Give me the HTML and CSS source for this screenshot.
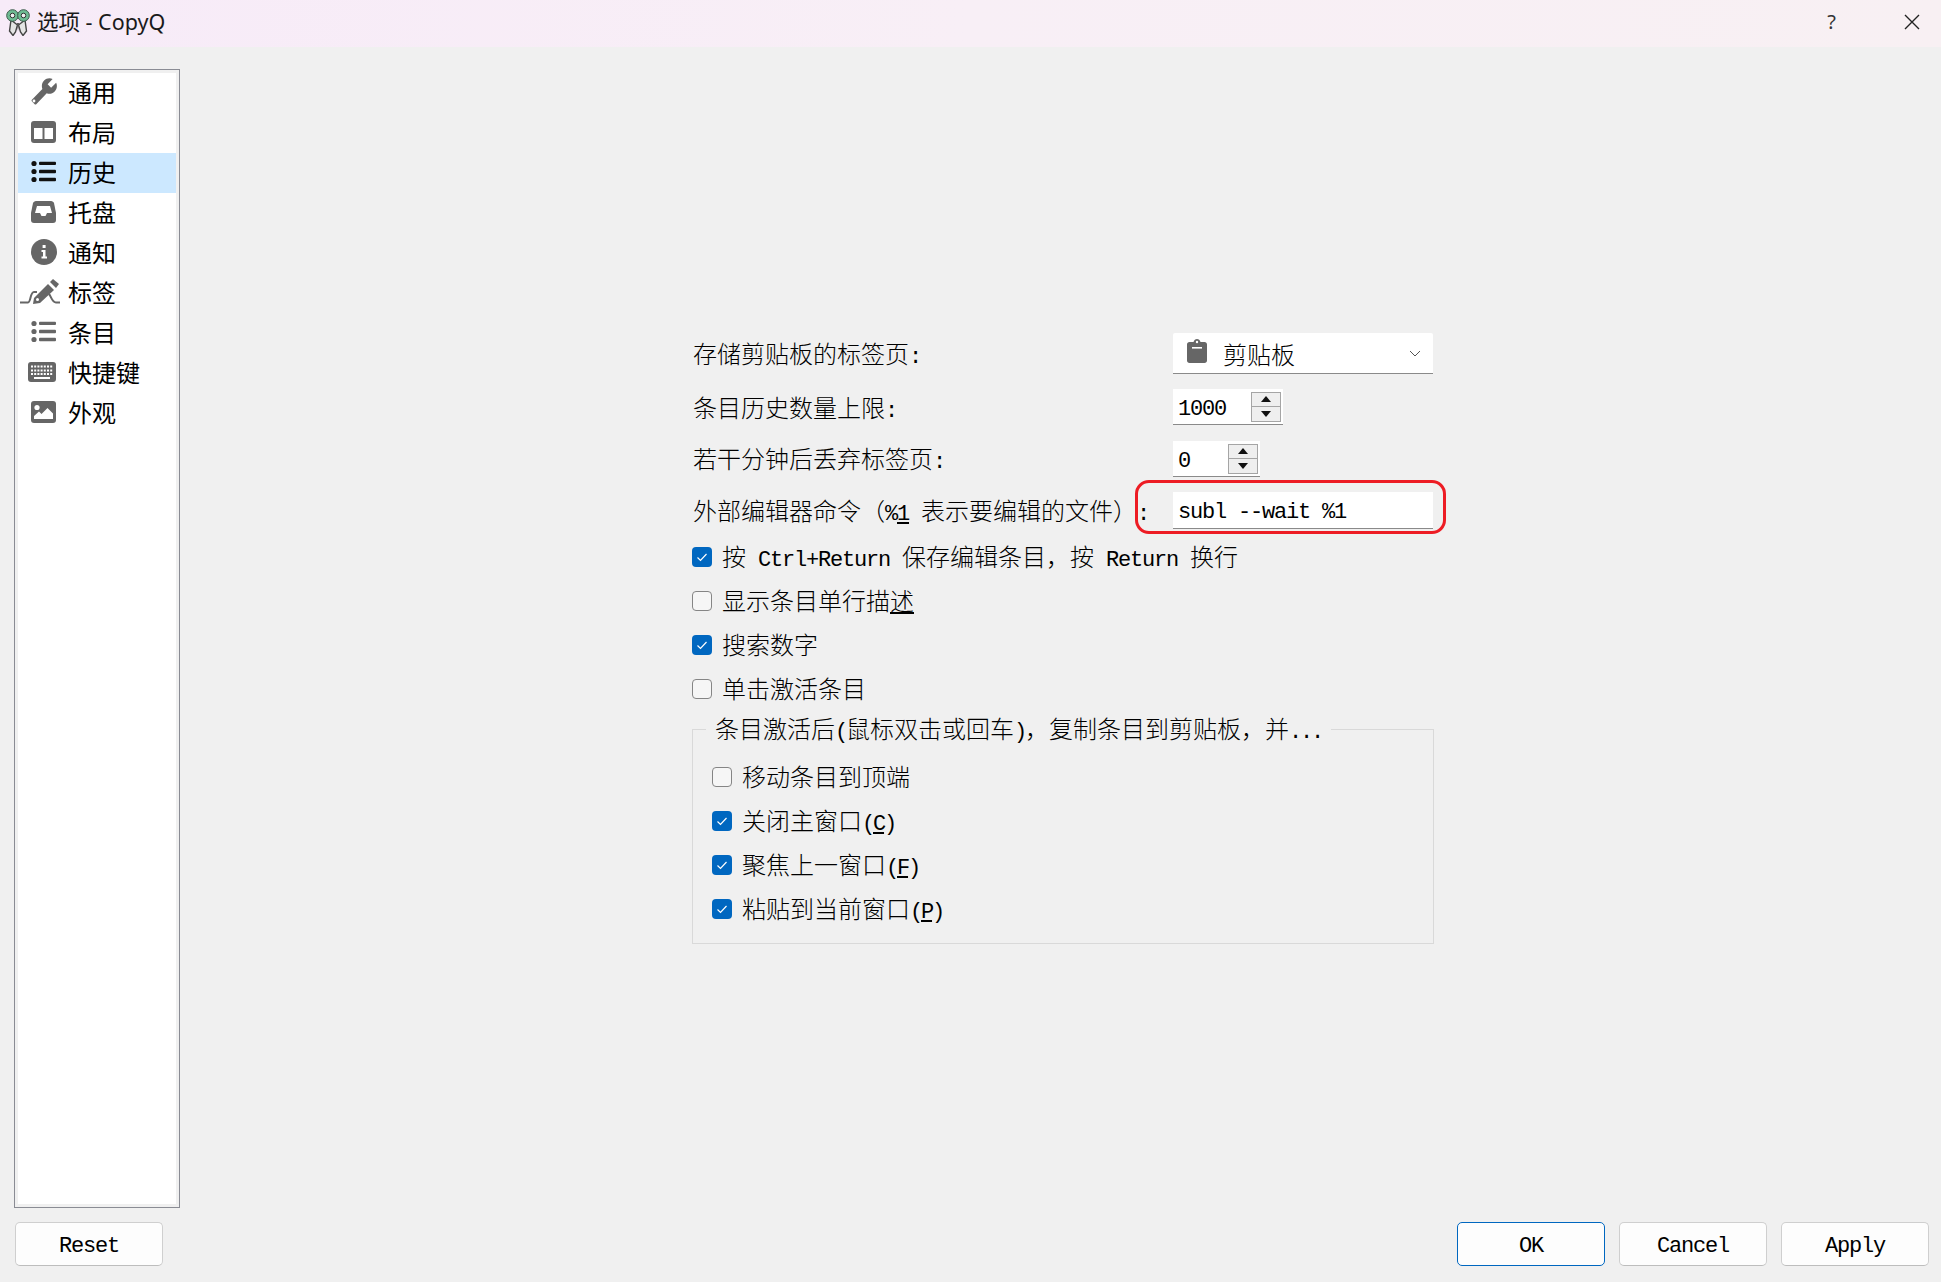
FILE: index.html
```html
<!DOCTYPE html>
<html lang="zh-CN">
<head>
<meta charset="utf-8">
<title>选项 - CopyQ</title>
<link rel="stylesheet" href="styles.css">
</head>
<body>
<div class="app">
  <header class="titlebar">
    <svg class="logo" viewBox="0 0 26 28" width="26" height="28">
      <path class="blade" d="M6 12 L12.5 17 L10.5 24 L8 27.5 L4.5 23 Z"/>
      <path class="blade" d="M20 12 L13.5 17 L15.5 24 L18 27.5 L21.5 23 Z"/>
      <path class="blade-inner" d="M12 15 L14 15 L13 23 Z"/>
      <circle class="ring" cx="7.5" cy="7.5" r="5.8"/>
      <circle class="ring" cx="18.5" cy="7.5" r="5.8"/>
      <circle class="ring-hole" cx="7.5" cy="7.5" r="2.3"/>
      <circle class="ring-hole" cx="18.5" cy="7.5" r="2.3"/>
    </svg>
    <span class="title-text">选项 - CopyQ</span>
    <span class="title-help">?</span>
    <svg class="title-close" viewBox="0 0 16 16" width="16" height="16"><path d="M1 1 L15 15 M15 1 L1 15"/></svg>
  </header>

  <div class="main">
    <nav class="sidebar">
      <div class="nav-item">
        <svg class="nav-icon" viewBox="0 0 40 30" width="40" height="30">
          <g transform="translate(38 -1) scale(-1.15 1.2)"><path d="M22.7 19l-9.1-9.1c.9-2.3.4-5-1.5-6.9-2-2-5-2.4-7.4-1.3L9 6 6 9 1.6 4.7C.4 7.1.9 10.1 2.9 12.1c1.9 1.9 4.6 2.4 6.9 1.5l9.1 9.1c.4.4 1 .4 1.4 0l2.3-2.3c.5-.4.5-1.1.1-1.4z"/></g>
          <circle class="hole" cx="14" cy="23" r="1.4"/>
        </svg>
        <span>通用</span>
      </div>
      <div class="nav-item">
        <svg class="nav-icon" viewBox="0 0 40 30" width="40" height="30">
          <rect x="11" y="3" width="25" height="22" rx="3"/>
          <rect class="hole" x="14" y="10" width="8.5" height="11"/>
          <rect class="hole" x="24.5" y="10" width="8.5" height="11"/>
        </svg>
        <span>布局</span>
      </div>
      <div class="nav-item selected">
        <svg class="nav-icon dark" viewBox="0 0 40 30" width="40" height="30">
          <circle cx="14" cy="5.5" r="2.6"/><circle cx="14" cy="13.5" r="2.6"/><circle cx="14" cy="21.5" r="2.6"/>
          <rect x="19" y="3.7" width="17" height="3.4" rx="1"/><rect x="19" y="11.8" width="17" height="3.4" rx="1"/><rect x="19" y="19.8" width="17" height="3.4" rx="1"/>
        </svg>
        <span>历史</span>
      </div>
      <div class="nav-item">
        <svg class="nav-icon" viewBox="0 0 40 30" width="40" height="30">
          <path d="M16 3 H31 C32.5 3 33.5 4 34 5 L36 15 V22 C36 23.7 35 25 33 25 H14 C12 25 11 23.7 11 22 V15 L13 5 C13.5 4 14.5 3 16 3 Z"/>
          <path class="hole" d="M17 8 H30 L32 15 H27 L25.5 18 H21.5 L20 15 H15 Z"/>
        </svg>
        <span>托盘</span>
      </div>
      <div class="nav-item">
        <svg class="nav-icon" viewBox="0 0 40 30" width="40" height="30">
          <circle cx="24" cy="14" r="13"/>
          <rect class="hole" x="22.6" y="7" width="3" height="3"/>
          <path class="hole" d="M21.5 12 H25.5 V18.5 H27 V20.5 H21.5 V18.5 H23 V14 H21.5 Z"/>
        </svg>
        <span>通知</span>
      </div>
      <div class="nav-item">
        <svg class="nav-icon" viewBox="0 0 40 30" width="40" height="30">
          <path class="line" d="M0 24.5 H8 C11 24.5 10 14 14 14 H17 M29 16 C31 18 32 24.5 36 24.5 H40"/>
          <path d="M14 20 L28 6 L34 12 L20 25 L13 26 Z"/>
          <path d="M30 4 L33 1 L39 6 L36 10 Z"/>
          <circle class="hole" cx="17.5" cy="21.5" r="1.5"/>
        </svg>
        <span>标签</span>
      </div>
      <div class="nav-item">
        <svg class="nav-icon" viewBox="0 0 40 30" width="40" height="30">
          <circle cx="14" cy="5.5" r="2.6"/><circle cx="14" cy="13.5" r="2.6"/><circle cx="14" cy="21.5" r="2.6"/>
          <rect x="19" y="3.7" width="17" height="3.4" rx="1"/><rect x="19" y="11.8" width="17" height="3.4" rx="1"/><rect x="19" y="19.8" width="17" height="3.4" rx="1"/>
        </svg>
        <span>条目</span>
      </div>
      <div class="nav-item">
        <svg class="nav-icon" viewBox="0 0 40 30" width="40" height="30">
          <rect x="8" y="4" width="28" height="20" rx="3"/>
          <path class="keys" d="M11 8.5 H33 M11 12.5 H33 M11 16 H33"/>
          <rect class="hole" x="14" y="19" width="16" height="2"/>
        </svg>
        <span>快捷键</span>
      </div>
      <div class="nav-item">
        <svg class="nav-icon" viewBox="0 0 40 30" width="40" height="30">
          <rect x="11" y="3" width="25" height="22" rx="3"/>
          <circle class="hole" cx="17" cy="9.5" r="2.6"/>
          <path class="hole" d="M14 21 V18 L19 13.5 L21.5 16 L27.5 10 L33 15.5 V21 Z"/>
        </svg>
        <span>外观</span>
      </div>
    </nav>

    <section class="panel">
      <div class="form">
        <div class="fields">
          <label class="field-label">存储剪贴板的标签页<span class="mono">:</span></label>
          <div class="combo">
            <svg class="combo-icon" viewBox="0 0 20 24" width="20" height="24">
              <path d="M2.5 3 H6.5 C7 1 8.5 0 10 0 C11.5 0 13 1 13.5 3 H17.5 C19 3 20 4 20 5.5 V21.5 C20 23 19 24 17.5 24 H2.5 C1 24 0 23 0 21.5 V5.5 C0 4 1 3 2.5 3 Z"/>
              <circle class="hole" cx="10" cy="3" r="1.2"/>
              <rect class="hole" x="5" y="8" width="10" height="1.6"/>
            </svg>
            <span>剪贴板</span>
            <svg class="chevron" viewBox="0 0 12 7" width="12" height="7"><path d="M1 1 L6 6 L11 1"/></svg>
          </div>

          <label class="field-label">条目历史数量上限<span class="mono">:</span></label>
          <div class="spin spin-wide">
            <span class="mono spin-value">1000</span>
            <div class="spin-buttons">
              <div class="spin-btn"><svg viewBox="0 0 10 6" width="10" height="6"><path d="M5 0 L10 6 H0 Z"/></svg></div>
              <div class="spin-btn"><svg viewBox="0 0 10 6" width="10" height="6"><path d="M0 0 H10 L5 6 Z"/></svg></div>
            </div>
          </div>

          <label class="field-label">若干分钟后丢弃标签页<span class="mono">:</span></label>
          <div class="spin spin-narrow">
            <span class="mono spin-value">0</span>
            <div class="spin-buttons">
              <div class="spin-btn"><svg viewBox="0 0 10 6" width="10" height="6"><path d="M5 0 L10 6 H0 Z"/></svg></div>
              <div class="spin-btn"><svg viewBox="0 0 10 6" width="10" height="6"><path d="M0 0 H10 L5 6 Z"/></svg></div>
            </div>
          </div>

          <label class="field-label">外部编辑器命令（<span class="mono">%<u>1</u> </span>表示要编辑的文件）<span class="mono">:</span></label>
          <div class="editor">
            <span class="mono">subl --wait %1</span>
            <div class="highlight"></div>
          </div>
        </div>

        <div class="check-row"><span class="box on"><svg viewBox="0 0 20 20" width="20" height="20"><path d="M5.5 10.5 L8.5 13.5 L14.5 7"/></svg></span><span class="check-text">按<span class="mono"> Ctrl+Return </span>保存编辑条目，按<span class="mono"> Return </span>换行</span></div>
        <div class="check-row"><span class="box"></span><span class="check-text">显示条目单行描<u>述</u></span></div>
        <div class="check-row"><span class="box on"><svg viewBox="0 0 20 20" width="20" height="20"><path d="M5.5 10.5 L8.5 13.5 L14.5 7"/></svg></span><span class="check-text">搜索数字</span></div>
        <div class="check-row"><span class="box"></span><span class="check-text">单击激活条目</span></div>

        <fieldset class="group">
          <legend>条目激活后<span class="mono">(</span>鼠标双击或回车<span class="mono">)</span>，复制条目到剪贴板，并<span class="mono">...</span></legend>
          <div class="check-row"><span class="box"></span><span class="check-text">移动条目到顶端</span></div>
          <div class="check-row"><span class="box on"><svg viewBox="0 0 20 20" width="20" height="20"><path d="M5.5 10.5 L8.5 13.5 L14.5 7"/></svg></span><span class="check-text">关闭主窗口<span class="mono">(<u>C</u>)</span></span></div>
          <div class="check-row"><span class="box on"><svg viewBox="0 0 20 20" width="20" height="20"><path d="M5.5 10.5 L8.5 13.5 L14.5 7"/></svg></span><span class="check-text">聚焦上一窗口<span class="mono">(<u>F</u>)</span></span></div>
          <div class="check-row"><span class="box on"><svg viewBox="0 0 20 20" width="20" height="20"><path d="M5.5 10.5 L8.5 13.5 L14.5 7"/></svg></span><span class="check-text">粘贴到当前窗口<span class="mono">(<u>P</u>)</span></span></div>
        </fieldset>
      </div>
    </section>
  </div>

  <footer class="footer">
    <button class="btn btn-reset mono">Reset</button>
    <div class="footer-right">
      <button class="btn btn-default mono">OK</button>
      <button class="btn mono">Cancel</button>
      <button class="btn mono">Apply</button>
    </div>
  </footer>
</div>
</body>
</html>
```

FILE: styles.css
```css
* { box-sizing: border-box; }

html, body {
  margin: 0;
  padding: 0;
  background: #f0f0f0;
}

body {
  font-family: "Noto Sans CJK SC", "Liberation Sans", sans-serif;
  font-size: 24px;
  color: #000;
  overflow: hidden;
}

.app {
  display: flex;
  flex-direction: column;
  width: 1941px;
  height: 1282px;
}

/* Title bar */
.titlebar {
  display: flex;
  align-items: center;
  height: 47px;
  flex: none;
  padding-left: 5px;
  background: linear-gradient(90deg, #f7ebf8 0%, #f8eff6 50%, #f8f0f3 100%);
  color: #1a1a1a;
}

.logo { flex: none; margin-top: -4px; }

.blade { fill: #e4e4e4; stroke: #444; stroke-width: 1.4; }
.blade-inner { fill: #555; }
.ring { fill: #6dbb92; stroke: #3d5a4c; stroke-width: 1; }
.ring-hole { fill: #f2f2f2; stroke: #333; stroke-width: 1; }

.title-text {
  margin-left: 6px;
  font-family: "Noto Sans", "Noto Sans CJK SC", sans-serif;
  font-size: 21.5px;
  margin-top: -6px;
}

.title-help {
  margin-left: auto;
  font-family: "Noto Sans", sans-serif;
  font-size: 20px;
  color: #333;
  margin-top: -5px;
}

.title-close {
  margin-left: 68px;
  margin-right: 21px;
  margin-top: -3px;
  fill: none;
  stroke: #222;
  stroke-width: 1.4;
}

/* Main area */
.main {
  display: flex;
  flex: none;
  height: 1139px;
  margin-top: 22px;
  padding-left: 14px;
}

.sidebar {
  flex: none;
  width: 166px;
  border: 1px solid #8a8c94;
  padding: 3px;
  box-shadow: inset 0 0 0 3px #f0f0f0;
  background: #fff;
}

.nav-item {
  display: flex;
  align-items: center;
  gap: 8px;
  height: 40px;
  padding-left: 2px;
  line-height: 40px;
}

.nav-item > span { padding-bottom: 2px; line-height: 36px; }

.nav-item.selected { background: #cce8ff; }

.nav-icon { flex: none; fill: #666; }
.nav-icon.dark { fill: #111; }
.nav-item .hole { fill: #fff; }
.nav-icon .line { fill: none; stroke: #666; stroke-width: 2; }
.nav-icon .keys { fill: none; stroke: #fff; stroke-width: 2; stroke-dasharray: 2 1.2; }

/* Form panel */
.panel {
  flex: 1;
  padding: 264px 0 0 512px;
  font-weight: 300;
}

.form { width: 742px; }

.mono {
  font-family: "Liberation Mono", "Noto Sans CJK SC", monospace;
  font-size: 22px;
  font-weight: 400;
  letter-spacing: -1.2px;
  line-height: 1;
}

.fields {
  display: grid;
  grid-template-columns: 481px 260px;
  grid-template-rows: 41px 37px 36px 37px;
  row-gap: 15px;
}

.field-label {
  white-space: pre;
  height: 36px;
  line-height: 34px;
  align-self: center;
  padding-left: 1px;
}

.combo, .spin, .editor {
  background: #fff;
  border-bottom: 1px solid #8a8a8a;
}

.combo {
  display: flex;
  align-items: center;
  height: 41px;
  padding-left: 14px;
  border-radius: 2px 2px 0 0;
}

.combo-icon { flex: none; fill: #666; margin-top: -4px; margin-right: 16px; }
.combo-icon .hole { fill: #fff; }
.chevron { margin-left: auto; margin-right: 12px; margin-top: 1px; fill: none; stroke: #555; stroke-width: 1; }

.spin {
  display: flex;
  align-items: center;
  height: 36px;
  padding-left: 5px;
}

.spin-wide { width: 110px; }
.spin-narrow { width: 87px; }

.spin-value { flex: 1; padding-top: 6px; }

.spin-buttons {
  display: flex;
  flex-direction: column;
  flex: none;
  width: 30px;
  height: 30px;
  margin-right: 2px;
  border: 1px solid #a5a5a5;
  background: #efefef;
}

.spin-btn {
  flex: 1;
  display: flex;
  align-items: center;
  justify-content: center;
  fill: #111;
}

.spin-btn + .spin-btn { border-top: 1px solid #a5a5a5; }

.editor {
  position: relative;
  display: flex;
  align-items: center;
  height: 37px;
  padding: 6px 0 0 5px;
}

.highlight {
  position: absolute;
  left: -38px;
  top: -12px;
  width: 311px;
  height: 54px;
  border: 3px solid #ed1c24;
  border-radius: 14px;
}

/* Checkboxes */
.check-row {
  display: flex;
  align-items: center;
  height: 44px;
  gap: 10px;
  white-space: pre;
}

.check-text { padding-bottom: 3px; line-height: 36px; }

.fields + .check-row { margin-top: 6px; }

.box {
  flex: none;
  width: 20px;
  height: 20px;
  border: 1px solid #858585;
  border-radius: 4px;
  background: #f6f6f6;
  display: block;
}

.box.on {
  border: none;
  background: #0067c0;
}

.box svg {
  display: block;
  fill: none;
  stroke: #fff;
  stroke-width: 1.2;
}

/* Group box */
.group {
  margin: 2px 0 0;
  padding: 10px 0 12px;
  width: 742px;
  border: 1px solid #d9d9d9;
}

.group .check-row { padding-left: 19px; }

.group .mono { letter-spacing: -2.2px; }

.group legend {
  margin-left: 13px;
  padding: 0 9px;
  line-height: 30px;
  height: 32px;
  white-space: pre;
}

/* Footer */
.footer {
  display: flex;
  justify-content: space-between;
  margin-top: 14px;
  padding: 0 12px 0 15px;
}

.footer-right {
  display: flex;
  gap: 14px;
}

.btn {
  width: 148px;
  height: 44px;
  padding: 6px 0 0;
  color: #000;
  background: #fdfdfd;
  border: 1px solid #cfcfcf;
  border-bottom-color: #bdbdbd;
  border-radius: 5px;
}

.btn-default {
  border: 1.5px solid #0067c0;
  background: #fdfdfd;
}
```
